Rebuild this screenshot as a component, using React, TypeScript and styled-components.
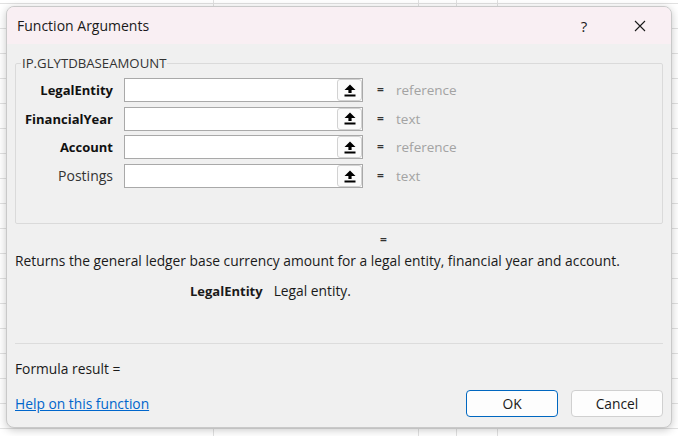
import React from "react";
import styled, { createGlobalStyle } from "styled-components";

const GlobalStyle = createGlobalStyle`
  html, body {
    margin: 0;
    padding: 0;
    width: 678px;
    height: 436px;
    overflow: hidden;
    background-color: #ffffff;
    background-image:
      linear-gradient(to bottom, #e1e1e1 1px, transparent 1px),
      linear-gradient(to right, transparent 213px, #e1e1e1 213px, #e1e1e1 214px, transparent 214px,
        transparent 418px, #e1e1e1 418px, #e1e1e1 419px, transparent 419px,
        transparent 456px, #e1e1e1 456px, #e1e1e1 457px, transparent 457px,
        transparent 497px, #e1e1e1 497px, #e1e1e1 498px, transparent 498px);
    background-size: 100% 25px, 100% 100%;
    background-position: 0 3px, 0 0;
    font-family: "Open Sans", "Noto Sans", sans-serif;
  }
`;

const Page = styled.div`
  width: 678px;
  height: 436px;
  box-sizing: border-box;
  padding: 6px 6px 8px 6px;
`;

const Dialog = styled.div`
  width: 666px;
  height: 422px;
  box-sizing: border-box;
  border: 1px solid #c9c9c9;
  border-radius: 8px;
  overflow: hidden;
  background: #f0f0f0;
  box-shadow: 0 2px 8px rgba(0, 0, 0, 0.22);
  display: flex;
  flex-direction: column;
`;

const TitleBar = styled.div`
  height: 37px;
  flex: none;
  background: #f9eff3;
  display: flex;
  align-items: center;
  padding: 0 3px 0 10px;
`;

const Title = styled.div`
  flex: 1;
  font-size: 14px;
  color: #1a1a1a;
`;

const TitleButton = styled.div`
  width: 56px;
  height: 37px;
  display: flex;
  align-items: center;
  justify-content: center;
  font-size: 15px;
  color: #1a1a1a;
`;

const Body = styled.div`
  flex: 1;
  display: flex;
  flex-direction: column;
  padding: 10px 8px 10px 8px;
  color: #1a1a1a;
  font-size: 13.8px;
`;

const Group = styled.fieldset`
  margin: 0;
  height: 170px;
  box-sizing: border-box;
  border: 1px solid #dadada;
  border-radius: 2px;
  padding: 6px 0 0 0;
  display: grid;
  grid-template-columns: 97px 239px 11px 1fr;
  grid-auto-rows: 28.7px;
  column-gap: 11px;
  align-content: start;
`;

const Legend = styled.legend`
  font-size: 13.2px;
  color: #333;
  padding: 0 1px;
  margin-left: 5px;
`;

const Label = styled.div<{ $bold?: boolean }>`
  font-weight: ${(p) => (p.$bold ? 700 : 400)};
  font-size: ${(p) => (p.$bold ? "13px" : "14px")};
  text-align: right;
  line-height: 24px;
  color: ${(p) => (p.$bold ? "#111" : "#333")};
`;

const InputBox = styled.div`
  height: 24px;
  box-sizing: border-box;
  border: 1px solid #a9a9a9;
  background: #ffffff;
  display: flex;
  justify-content: flex-end;
`;

const PickButton = styled.div`
  width: 25px;
  height: 22px;
  box-sizing: border-box;
  border: 1px solid #d2d2d2;
  border-radius: 3px;
  background: #fbfbfb;
  display: flex;
  align-items: center;
  justify-content: center;
`;

const Equals = styled.div`
  font-size: 12px;
  font-weight: 700;
  line-height: 24px;
  padding-left: 3px;
  color: #333;
`;

const Hint = styled.div`
  font-size: 13.5px;
  color: #a3a3a3;
  line-height: 24px;
`;

const ResultEq = styled.div`
  font-size: 12px;
  font-weight: 700;
  line-height: 14px;
  margin-top: 9px;
  padding-left: 365px;
  color: #333;
`;

const Description = styled.div`
  line-height: 18px;
  margin-top: 5px;
`;

const ArgHelp = styled.div`
  display: flex;
  align-items: baseline;
  gap: 11px;
  line-height: 18px;
  margin-top: 12px;
  padding-left: 175px;
`;

const ArgName = styled.span`
  font-weight: 700;
  font-size: 13px;
`;

const Divider = styled.div`
  margin-top: 43px;
  height: 1px;
  background: #dcdcdc;
`;

const ResultLine = styled.div`
  line-height: 18px;
  margin-top: 16px;
`;

const Footer = styled.div`
  margin-top: auto;
  display: flex;
  align-items: center;
`;

const HelpLink = styled.a`
  flex: 1;
  color: #0066cc;
  text-decoration: underline;
  cursor: pointer;
`;

const Button = styled.button<{ $primary?: boolean }>`
  width: 92px;
  height: 27px;
  box-sizing: border-box;
  margin-left: 13px;
  border-radius: 4px;
  border: 1px solid ${(p) => (p.$primary ? "#0067c0" : "#d0d0d0")};
  background: #fdfdfd;
  font-family: "Open Sans", "Noto Sans", sans-serif;
  font-size: 13.8px;
  color: #1a1a1a;
  padding: 0;
`;

// collapse-to-range arrow: bold up arrow over a bar
const UpArrow = () => (
  <svg width="12" height="13" viewBox="0 0 12 13">
    <path d="M6 0.5 L11.5 6 L7.6 6 L7.6 9 L4.4 9 L4.4 6 L0.5 6 Z" fill="#000" />
    <rect x="0.5" y="10.5" width="11" height="2" fill="#000" />
  </svg>
);

const CloseIcon = () => (
  <svg width="12" height="12" viewBox="0 0 12 12">
    <path d="M1 1 L11 11 M11 1 L1 11" stroke="#1a1a1a" strokeWidth="1.1" />
  </svg>
);

const args = [
  { name: "LegalEntity", bold: true, hint: "reference" },
  { name: "FinancialYear", bold: true, hint: "text" },
  { name: "Account", bold: true, hint: "reference" },
  { name: "Postings", bold: false, hint: "text" },
];

export default function App() {
  return (
    <>
      <GlobalStyle />
      <Page>
        <Dialog>
          <TitleBar>
            <Title>Function Arguments</Title>
            <TitleButton>?</TitleButton>
            <TitleButton>
              <CloseIcon />
            </TitleButton>
          </TitleBar>
          <Body>
            <Group>
              <Legend>IP.GLYTDBASEAMOUNT</Legend>
              {args.map((a) => (
                <React.Fragment key={a.name}>
                  <Label $bold={a.bold}>{a.name}</Label>
                  <InputBox>
                    <PickButton>
                      <UpArrow />
                    </PickButton>
                  </InputBox>
                  <Equals>=</Equals>
                  <Hint>{a.hint}</Hint>
                </React.Fragment>
              ))}
            </Group>
            <ResultEq>=</ResultEq>
            <Description>
              Returns the general ledger base currency amount for a legal entity, financial year and account.
            </Description>
            <ArgHelp>
              <ArgName>LegalEntity</ArgName>
              <span>Legal entity.</span>
            </ArgHelp>
            <Divider />
            <ResultLine>Formula result =</ResultLine>
            <Footer>
              <HelpLink>Help on this function</HelpLink>
              <Button $primary>OK</Button>
              <Button>Cancel</Button>
            </Footer>
          </Body>
        </Dialog>
      </Page>
    </>
  );
}
